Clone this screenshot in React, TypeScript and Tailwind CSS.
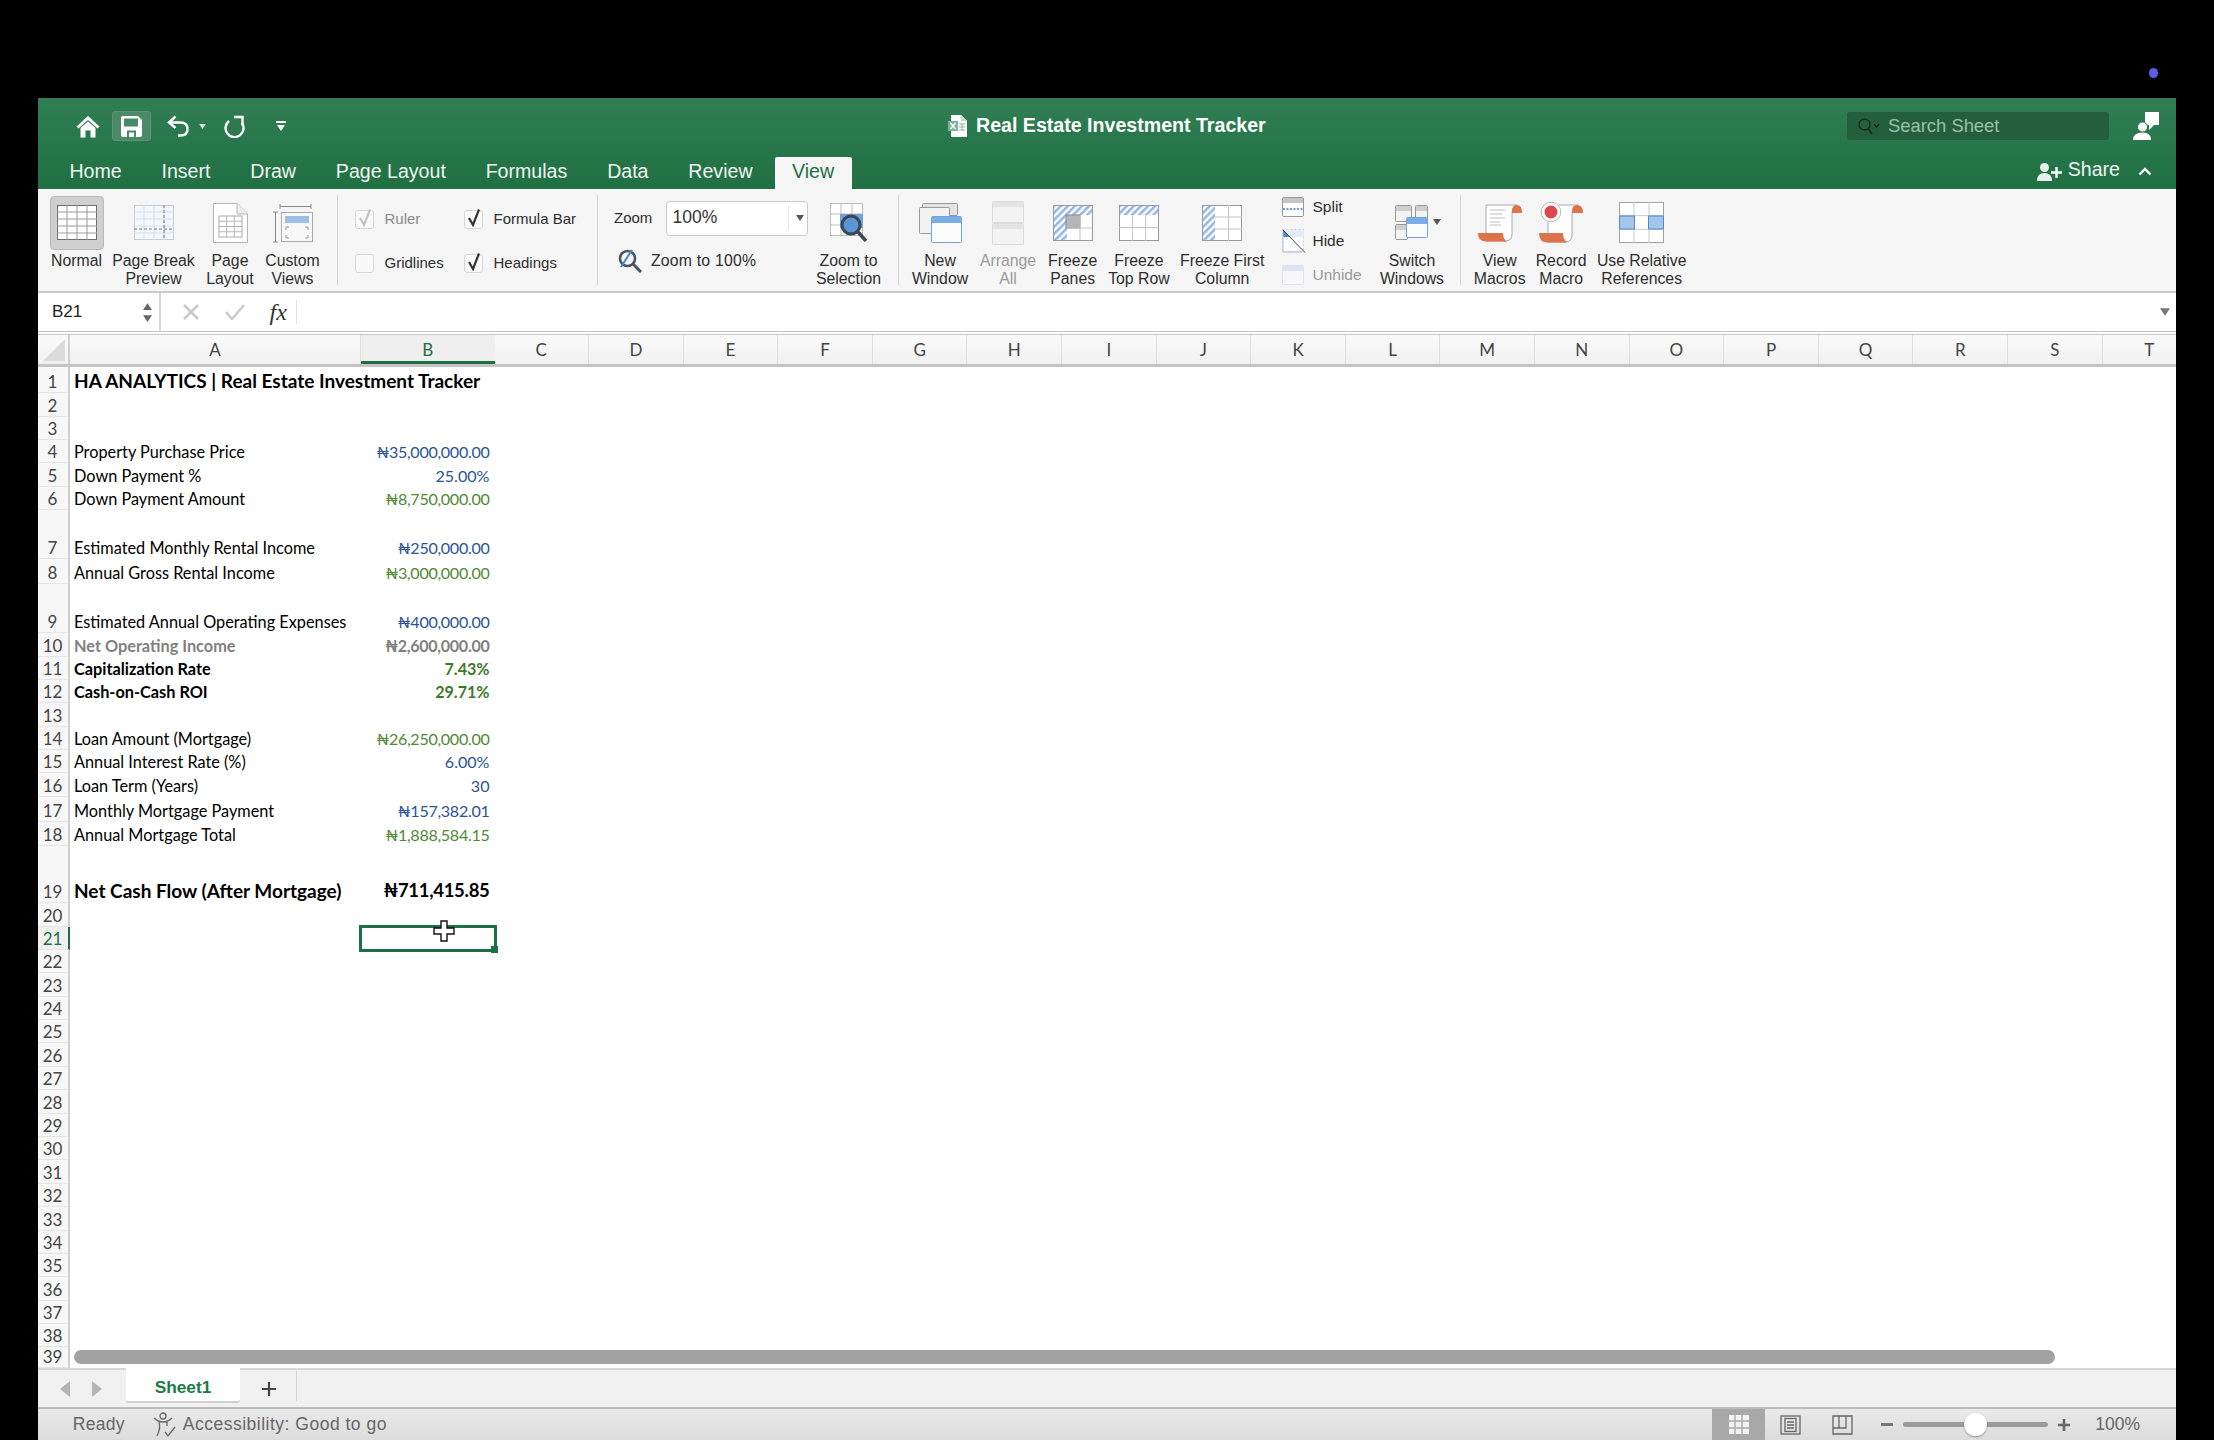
import type { ReactNode } from "react";

const sheetFont = "font-['Lato','Noto_Sans',sans-serif]";
const uiFont = "font-['Liberation_Sans',sans-serif]";

type Row = { label?: string; value?: string; tone?: string; big?: boolean; bold?: boolean };

const rowHeights = [
  "h-[26px]", "h-[23.7px]", "h-[23.3px]", "h-[23px]", "h-[24px]", "h-[23px]", "h-[49px]", "h-[25px]", "h-[49px]", "h-[24px]",
  "h-[23px]", "h-[23px]", "h-[24px]", "h-[23px]", "h-[23px]", "h-[24px]", "h-[25px]", "h-[24px]", "h-[57px]", "h-[24px]",
  "h-[23px]", "h-[23px]", "h-[24px]", "h-[23px]", "h-[23.4px]", "h-[23.4px]", "h-[23.4px]", "h-[23.4px]", "h-[23.4px]", "h-[23.4px]",
  "h-[23.4px]", "h-[23.4px]", "h-[23.4px]", "h-[23.4px]", "h-[23.4px]", "h-[23.4px]", "h-[23.4px]", "h-[23.4px]", "h-[20.5px]",
];

const blue = "text-[#2b5497]";
const green = "text-[#4f8a35]";
const boldGreen = "text-[#3f7a2c]";

const rows: Record<number, Row> = {
  1: { label: "HA ANALYTICS | Real Estate Investment Tracker", bold: true, big: true },
  4: { label: "Property Purchase Price", value: "₦35,000,000.00", tone: blue },
  5: { label: "Down Payment %", value: "25.00%", tone: blue },
  6: { label: "Down Payment Amount", value: "₦8,750,000.00", tone: green },
  7: { label: "Estimated Monthly Rental Income", value: "₦250,000.00", tone: blue },
  8: { label: "Annual Gross Rental Income", value: "₦3,000,000.00", tone: green },
  9: { label: "Estimated Annual Operating Expenses", value: "₦400,000.00", tone: blue },
  10: { label: "Net Operating Income", value: "₦2,600,000.00", tone: "text-[#7f7f7f]", bold: true },
  11: { label: "Capitalization Rate", value: "7.43%", tone: boldGreen, bold: true },
  12: { label: "Cash-on-Cash ROI", value: "29.71%", tone: boldGreen, bold: true },
  14: { label: "Loan Amount (Mortgage)", value: "₦26,250,000.00", tone: green },
  15: { label: "Annual Interest Rate (%)", value: "6.00%", tone: blue },
  16: { label: "Loan Term (Years)", value: "30", tone: blue },
  17: { label: "Monthly Mortgage Payment", value: "₦157,382.01", tone: blue },
  18: { label: "Annual Mortgage Total", value: "₦1,888,584.15", tone: green },
  19: { label: "Net Cash Flow (After Mortgage)", value: "₦711,415.85", tone: "text-black", bold: true, big: true },
};

const otherColumns = ["C", "D", "E", "F", "G", "H", "I", "J", "K", "L", "M", "N", "O", "P", "Q", "R", "S", "T"];
const tabs = ["Home", "Insert", "Draw", "Page Layout", "Formulas", "Data", "Review"];

function Cells({ x, y, w, h, cols, rows: r, stroke = "#bdbdbd" }: { x: number; y: number; w: number; h: number; cols: number; rows: number; stroke?: string }) {
  const lines = [];
  for (let i = 1; i < cols; i++) {
    const lx = x + (w / cols) * i;
    lines.push(<line key={`c${i}`} x1={lx} x2={lx} y1={y} y2={y + h} stroke={stroke} />);
  }
  for (let i = 1; i < r; i++) {
    const ly = y + (h / r) * i;
    lines.push(<line key={`r${i}`} x1={x} x2={x + w} y1={ly} y2={ly} stroke={stroke} />);
  }
  return <g>{lines}</g>;
}

function Hatch({ id }: { id: string }) {
  return (
    <pattern id={id} width="5" height="5" patternUnits="userSpaceOnUse" patternTransform="rotate(45)">
      <rect width="5" height="5" fill="#ffffff" />
      <rect width="2.6" height="5" fill="#94b8e2" />
    </pattern>
  );
}

function HomeIcon() {
  return (
    <svg width="24" height="23" viewBox="0 0 24 23">
      <path d="M12 1 L23.5 11.5 L21.5 13.5 L12 5 L2.5 13.5 L.5 11.5 Z" fill="#fff" />
      <path d="M4.5 13 L12 6.5 L19.5 13 V22.5 H14.5 V15.5 H9.5 V22.5 H4.5 Z" fill="#fff" />
    </svg>
  );
}

function SaveIcon() {
  return (
    <svg width="21" height="21" viewBox="0 0 21 21">
      <path d="M2 0 H17 L21 4 V19 Q21 21 19 21 H2 Q0 21 0 19 V2 Q0 0 2 0 Z" fill="#fff" />
      <rect x="3" y="2.5" width="14" height="8" fill="#4b8a66" />
      <rect x="6" y="14.5" width="9" height="6.5" fill="#4b8a66" />
      <rect x="8" y="16.5" width="5" height="4.5" fill="#fff" />
    </svg>
  );
}

function UndoIcon() {
  return (
    <svg width="22" height="22" viewBox="0 0 22 22" fill="none" stroke="#fff" strokeWidth="2.4">
      <path d="M8.5 1.5 L2 7.5 L8.5 13" />
      <path d="M2.5 7.5 H13 Q20.5 7.5 20.5 14 Q20.5 20.5 13.5 20.5 H11" />
    </svg>
  );
}

function RedoIcon() {
  return (
    <svg width="21" height="23" viewBox="0 0 21 23" fill="none" stroke="#fff" strokeWidth="2.4">
      <path d="M5 6 A9 9 0 1 0 18 8" />
      <path d="M10 2 H18.5 V10.5" />
    </svg>
  );
}

function Caret({ color = "#444", w = 8, h = 6 }: { color?: string; w?: number; h?: number }) {
  return (
    <svg width={w} height={h} viewBox="0 0 8 6">
      <path d="M0 0 H8 L4 6 Z" fill={color} />
    </svg>
  );
}

function DocIcon() {
  return (
    <svg width="19" height="22" viewBox="0 0 19 22">
      <path d="M3 0 H13 L19 6 V22 H3 Z" fill="#fff" />
      <path d="M13 0 L19 6 H13 Z" fill="#c9d9cf" />
      <rect x="0" y="6" width="10" height="10" fill="#7fb596" />
      <path d="M2.5 8 L7.5 14 M7.5 8 L2.5 14" stroke="#fff" strokeWidth="1.3" />
      <path d="M11 9 H17 M11 12 H17 M11 15 H17 M14 8 V16" stroke="#8fb8a0" />
    </svg>
  );
}

function SearchIcon() {
  return (
    <svg width="22" height="17" viewBox="0 0 22 17" fill="none" stroke="#10291b" strokeWidth="1.3">
      <circle cx="6.5" cy="6.5" r="5.5" />
      <path d="M10.5 11 L14 16" strokeWidth="1.6" />
      <path d="M16 6 L18.5 9 L21 6" />
    </svg>
  );
}

function CommentsIcon() {
  return (
    <svg width="26" height="28" viewBox="0 0 26 28">
      <path d="M12 0 H26 V13 H21 L16 18 V13 H12 Z" fill="#fff" />
      <circle cx="9.5" cy="15" r="5" fill="#fff" stroke="#2a7a4e" />
      <path d="M0 28 Q0 20.5 9.5 20.5 Q18 20.5 18 28 Z" fill="#fff" />
    </svg>
  );
}

function ShareIcon() {
  return (
    <svg width="25" height="18" viewBox="0 0 25 18">
      <circle cx="7.5" cy="4.5" r="4.5" fill="#e8f0eb" />
      <path d="M0 18 Q0 10 7.5 10 Q15 10 15 18 Z" fill="#e8f0eb" />
      <path d="M14 9.5 H25 M19.5 4 V15" stroke="#fff" strokeWidth="2.4" />
    </svg>
  );
}

function NormalIcon() {
  return (
    <svg width="40" height="35" viewBox="0 0 40 35">
      <rect x=".5" y=".5" width="39" height="34" fill="#fff" stroke="#6f6f6f" />
      <Cells x={0} y={0} w={40} h={35} cols={4} rows={5} stroke="#9a9a9a" />
    </svg>
  );
}

function PageBreakIcon() {
  return (
    <svg width="40" height="35" viewBox="0 0 40 35">
      <rect x=".5" y=".5" width="39" height="34" fill="#f3f6fb" stroke="#c4ccd6" />
      <Cells x={0} y={0} w={40} h={35} cols={4} rows={5} stroke="#d3dfee" />
      <path d="M30 0 V35 M0 24 H40" stroke="#777" strokeDasharray="3 2" />
    </svg>
  );
}

function PageLayoutIcon() {
  return (
    <svg width="35" height="40" viewBox="0 0 35 40">
      <path d="M.5 .5 H24 L34.5 11 V39.5 H.5 Z" fill="#fff" stroke="#b5b5b5" />
      <path d="M24 .5 V11 H34.5" fill="#ececec" stroke="#b5b5b5" />
      <rect x="6" y="13" width="23" height="21" fill="#fff" stroke="#a8a8a8" />
      <Cells x={6} y={13} w={23} h={21} cols={3} rows={4} stroke="#b5b5b5" />
    </svg>
  );
}

function CustomViewsIcon() {
  return (
    <svg width="41" height="40" viewBox="0 0 41 40" fill="none">
      <path d="M8 1 V6 M39 1 V6 M8 3.5 H39" stroke="#888" />
      <path d="M1 9 H6 M1 39 H6 M3.5 9 V39" stroke="#888" />
      <rect x="9.5" y="9.5" width="31" height="29" fill="#f8f8f8" stroke="#aaa" />
      <rect x="13" y="13" width="24" height="7" fill="#9bbfe6" />
      <path d="M14 27 V24 H17 M33 24 H36 V27 M14 32 V35 H17 M33 35 H36 V32" stroke="#999" />
    </svg>
  );
}

function Zoom100Icon() {
  return (
    <svg width="24" height="24" viewBox="0 0 24 24" fill="none">
      <circle cx="9.5" cy="9.5" r="7.5" stroke="#4a5361" strokeWidth="2.6" />
      <path d="M15 15 L23 23" stroke="#4a5361" strokeWidth="3" />
      <path d="M3 18 L14 1" stroke="#4a86d1" strokeWidth="2" />
    </svg>
  );
}

function ZoomSelectionIcon() {
  return (
    <svg width="38" height="39" viewBox="0 0 38 39" fill="none">
      <rect x=".5" y=".5" width="32" height="32" fill="#fff" stroke="#bcbcbc" />
      <Cells x={0} y={0} w={33} h={33} cols={3} rows={3} />
      <rect x="10" y="11" width="23" height="14" fill="#6ea3dd" />
      <circle cx="21" cy="22" r="9" fill="#5b96d4" stroke="#3c4654" strokeWidth="3" />
      <path d="M28 29 L36 38" stroke="#3c4654" strokeWidth="3.4" />
    </svg>
  );
}

function NewWindowIcon() {
  return (
    <svg width="43" height="40" viewBox="0 0 43 40">
      <rect x="3.5" y=".5" width="35" height="12" fill="#e3e3e3" stroke="#999" rx="1" />
      <rect x=".5" y="4.5" width="30" height="26" fill="#f2f2f2" stroke="#999" rx="1" />
      <rect x="12.5" y="13.5" width="30" height="26" fill="#fbfbfb" stroke="#6fa5dc" rx="1" />
      <rect x="13" y="14" width="29" height="6" fill="#78aee5" />
    </svg>
  );
}

function ArrangeIcon() {
  return (
    <svg width="32" height="44" viewBox="0 0 32 44">
      <rect x=".5" y=".5" width="31" height="21" fill="#f3f3f3" stroke="#dcdcdc" rx="1" />
      <rect x="1" y="1" width="30" height="5" fill="#e3e3e3" />
      <rect x=".5" y="22.5" width="31" height="21" fill="#f3f3f3" stroke="#dcdcdc" rx="1" />
      <rect x="1" y="23" width="30" height="5" fill="#e3e3e3" />
    </svg>
  );
}

function FreezePanesIcon() {
  return (
    <svg width="40" height="36" viewBox="0 0 40 36">
      <defs><Hatch id="fp" /></defs>
      <rect x=".5" y=".5" width="39" height="35" fill="#fff" stroke="#9a9a9a" />
      <rect x="1" y="1" width="38" height="9" fill="url(#fp)" />
      <rect x="1" y="1" width="13" height="34" fill="url(#fp)" />
      <rect x="13" y="10" width="14" height="13" fill="#b5b5b9" stroke="#888" />
      <path d="M27 23 H39 M14 23 H27 M27 10 V35" stroke="#c4c4c4" />
    </svg>
  );
}

function FreezeRowIcon() {
  return (
    <svg width="40" height="36" viewBox="0 0 40 36">
      <defs><Hatch id="fr" /></defs>
      <rect x=".5" y=".5" width="39" height="35" fill="#fff" stroke="#9a9a9a" />
      <Cells x={0} y={9} w={40} h={27} cols={3} rows={2} stroke="#c4c4c4" />
      <rect x="1" y="1" width="38" height="9" fill="url(#fr)" />
    </svg>
  );
}

function FreezeColumnIcon() {
  return (
    <svg width="40" height="36" viewBox="0 0 40 36">
      <defs><Hatch id="fc" /></defs>
      <rect x=".5" y=".5" width="39" height="35" fill="#fff" stroke="#9a9a9a" />
      <Cells x={13} y={0} w={27} h={36} cols={2} rows={3} stroke="#c4c4c4" />
      <rect x="1" y="1" width="12" height="34" fill="url(#fc)" />
    </svg>
  );
}

function SplitIcon() {
  return (
    <svg width="22" height="20" viewBox="0 0 22 20">
      <rect x=".5" y=".5" width="21" height="19" fill="#fff" stroke="#999" rx="1.5" />
      <rect x="1" y="1" width="20" height="5" fill="#c4c4c4" />
      <path d="M1 12 H21" stroke="#3d78c4" strokeDasharray="2 1.5" strokeWidth="1.4" />
    </svg>
  );
}

function HideIcon() {
  return (
    <svg width="24" height="24" viewBox="0 0 24 24">
      <rect x=".5" y=".5" width="21" height="22" fill="#fff" stroke="#cfcfcf" strokeDasharray="2 2" />
      <rect x="1" y="1" width="21" height="7" fill="#e4ecf6" />
      <path d="M1 1 L8 8 H1 Z" fill="#4a86d1" />
      <path d="M1 1 L23 23.5" stroke="#444" />
      <path d="M1 3 V23 H20" fill="none" stroke="#9dbfe4" />
    </svg>
  );
}

function UnhideIcon() {
  return (
    <svg width="22" height="20" viewBox="0 0 22 20">
      <rect x=".5" y=".5" width="21" height="19" fill="#f7f7f7" stroke="#dde4ec" rx="1" />
      <rect x="1" y="1" width="20" height="5" fill="#d9e5f3" />
    </svg>
  );
}

function SwitchIcon() {
  return (
    <svg width="33" height="35" viewBox="0 0 33 35">
      <rect x=".5" y=".5" width="16" height="16" fill="#f3f3f3" stroke="#999" rx="1" />
      <rect x="1" y="1" width="15" height="5" fill="#cfcfcf" />
      <rect x="20.5" y=".5" width="12" height="16" fill="#f3f3f3" stroke="#999" rx="1" />
      <rect x="21" y="1" width="11" height="5" fill="#cfcfcf" />
      <rect x=".5" y="19.5" width="12" height="15" fill="#f3f3f3" stroke="#999" rx="1" />
      <rect x="1" y="20" width="11" height="5" fill="#cfcfcf" />
      <rect x="11.5" y="12.5" width="21" height="20" fill="#fbfbfb" stroke="#6fa5dc" rx="1" />
      <rect x="12" y="13" width="20" height="6" fill="#78aee5" />
    </svg>
  );
}

function ViewMacrosIcon() {
  return (
    <svg width="44" height="38" viewBox="0 0 44 38">
      <path d="M8 1 H39 Q35 2 34 8 V30 Q34 37 27 37 H8 Z" fill="#fff" stroke="#a8a8a8" />
      <path d="M34 9 V7 Q34 1 39 1 Q44 1 44 9 Z" fill="#dd7349" />
      <path d="M0 29 H25 Q25 35 29 37.5 H8 Q0 37.5 0 29 Z" fill="#dd7349" />
      <path d="M12 6 H27 M12 10 H25 M12 14 H27 M12 18 H22 M12 21 H23" stroke="#bdbdbd" strokeWidth="1.2" />
    </svg>
  );
}

function RecordMacroIcon() {
  return (
    <svg width="44" height="41" viewBox="0 0 44 41">
      <path d="M20 3 H39 Q35 4 33 11 V33 Q33 40 26 40 H9 V20" fill="#fff" stroke="#a8a8a8" />
      <path d="M33 11 V9 Q33 3 38 3 Q44 3 44 11 Z" fill="#dd7349" />
      <path d="M0 31 H24 Q24 37 28 40.5 H8 Q0 40.5 0 31 Z" fill="#dd7349" />
      <circle cx="12" cy="10" r="9.8" fill="#fff" stroke="#bbb" />
      <circle cx="12" cy="10" r="6.5" fill="#e0474c" />
    </svg>
  );
}

function RelativeIcon() {
  return (
    <svg width="45" height="41" viewBox="0 0 45 41">
      <rect x=".5" y=".5" width="44" height="40" fill="#fff" stroke="#a0a0a0" />
      <Cells x={0} y={0} w={45} h={41} cols={3} rows={3} stroke="#c8c8c8" />
      <rect x=".5" y="14" width="15" height="13" fill="#a5c6ea" stroke="#4a8ad0" />
      <rect x="29.5" y="14" width="15" height="13" fill="#a5c6ea" stroke="#4a8ad0" />
    </svg>
  );
}

function BigButton({ width, icon, lines, muted }: { width: string; icon: ReactNode; lines: string[]; muted?: boolean }) {
  return (
    <div className={`flex shrink-0 flex-col items-center pt-[6px] ${width}`}>
      <div className="flex h-[55px] items-center justify-center">{icon}</div>
      <div className={`mt-[2px] flex flex-col items-center text-[15.8px] leading-[17.5px] whitespace-nowrap ${muted ? "text-[#9a9a9a]" : "text-[#2e2e2e]"}`}>
        {lines.map((l) => (
          <span key={l}>{l}</span>
        ))}
      </div>
    </div>
  );
}

function RibbonCheck({ label, checked, muted }: { label: string; checked?: boolean; muted?: boolean }) {
  return (
    <div className="flex h-[19px] items-center">
      <span className="flex h-[19px] w-[19px] items-center justify-center rounded-[3px] border border-[#d6d6d6] bg-[#f9f9f9]">
        {checked ? (
          <svg className="-mt-[3px]" width="14" height="19" viewBox="0 0 14 19" fill="none">
            <path d="M2 10 L6 17 L12 1.5" stroke={muted ? "#c4c4c4" : "#333"} strokeWidth="2.2" />
          </svg>
        ) : null}
      </span>
      <span className={`ml-[10.5px] text-[15px] whitespace-nowrap ${muted ? "text-[#8a8a8a]" : "text-[#2e2e2e]"}`}>{label}</span>
    </div>
  );
}

function Separator({ margin }: { margin: string }) {
  return <div className={`mt-[6px] h-[90px] w-px shrink-0 bg-[#d4d4d4] ${margin}`} />;
}

function SmallAction({ icon, label, muted }: { icon: ReactNode; label: string; muted?: boolean }) {
  return (
    <div className="flex h-[24px] items-center">
      <div className="flex w-[30px] justify-start">{icon}</div>
      <span className={`text-[15.5px] ${muted ? "text-[#9a9a9a]" : "text-[#2e2e2e]"}`}>{label}</span>
    </div>
  );
}

function Ribbon() {
  return (
    <div className={`flex h-[104px] shrink-0 border-b-2 border-[#cbcbcb] bg-[#f5f5f5] pl-[11.5px] ${uiFont}`}>
      <BigButton
        width="w-[54px]"
        icon={
          <div className="flex h-[54px] w-[54px] items-center justify-center rounded-[4px] border border-[#b9b9b9] bg-[#cfcfcf]">
            <NormalIcon />
          </div>
        }
        lines={["Normal"]}
      />
      <BigButton width="w-[100px]" icon={<PageBreakIcon />} lines={["Page Break", "Preview"]} />
      <BigButton width="w-[53px]" icon={<PageLayoutIcon />} lines={["Page", "Layout"]} />
      <BigButton width="w-[72px]" icon={<CustomViewsIcon />} lines={["Custom", "Views"]} />
      <Separator margin="ml-[8px]" />

      <div className="ml-[17.5px] flex w-[109px] shrink-0 flex-col gap-[25px] pt-[20.7px]">
        <RibbonCheck label="Ruler" checked muted />
        <RibbonCheck label="Gridlines" />
      </div>
      <div className="flex w-[133px] shrink-0 flex-col gap-[25px] pt-[20.7px]">
        <RibbonCheck label="Formula Bar" checked />
        <RibbonCheck label="Headings" checked />
      </div>
      <Separator margin="" />

      <div className="ml-[16px] flex w-[196px] shrink-0 flex-col pt-[12px]">
        <div className="flex h-[35px] items-center">
          <span className="w-[51.5px] text-[15px] text-[#2e2e2e]">Zoom</span>
          <div className="flex h-[35px] w-[142px] items-center rounded-[4px] border border-[#c9c9c9] bg-white pb-[2px] pl-[6px]">
            <span className="w-[115px] text-[17.5px] text-[#333]">100%</span>
            <span className="mr-[7px] h-[24px] w-px bg-[#e4e4e4]" />
            <Caret color="#555" />
          </div>
        </div>
        <div className="mt-[13px] flex items-center pl-[4px]">
          <Zoom100Icon />
          <span className="ml-[9px] text-[15.8px] tracking-[0.2px] text-[#2e2e2e]">Zoom to 100%</span>
        </div>
      </div>
      <BigButton width="w-[77px]" icon={<ZoomSelectionIcon />} lines={["Zoom to", "Selection"]} />
      <Separator margin="ml-[11px]" />

      <BigButton width="w-[82px]" icon={<NewWindowIcon />} lines={["New", "Window"]} />
      <BigButton width="w-[54px]" icon={<ArrangeIcon />} lines={["Arrange", "All"]} muted />
      <BigButton width="w-[75.4px]" icon={<FreezePanesIcon />} lines={["Freeze", "Panes"]} />
      <BigButton width="w-[57px]" icon={<FreezeRowIcon />} lines={["Freeze", "Top Row"]} />
      <BigButton width="w-[109.6px]" icon={<FreezeColumnIcon />} lines={["Freeze First", "Column"]} />

      <div className="flex w-[93px] shrink-0 flex-col gap-[10px] pt-[6px] pl-[5.5px]">
        <SmallAction icon={<SplitIcon />} label="Split" />
        <SmallAction icon={<HideIcon />} label="Hide" />
        <SmallAction icon={<UnhideIcon />} label="Unhide" muted />
      </div>
      <div className="relative w-[84px] shrink-0">
        <BigButton width="w-[84px]" icon={<SwitchIcon />} lines={["Switch", "Windows"]} />
        <span className="absolute top-[30px] left-[63px]">
          <Caret color="#555" />
        </span>
      </div>
      <Separator margin="ml-[5.7px]" />

      <BigButton width="w-[78px]" icon={<ViewMacrosIcon />} lines={["View", "Macros"]} />
      <BigButton width="w-[45px]" icon={<RecordMacroIcon />} lines={["Record", "Macro"]} />
      <BigButton width="w-[116px]" icon={<RelativeIcon />} lines={["Use Relative", "References"]} />
    </div>
  );
}

function TitleBar() {
  return (
    <div className={`flex h-[91px] shrink-0 flex-col bg-gradient-to-b from-[#317e54] to-[#1f7043] ${uiFont}`}>
      <div className="flex h-[56px] shrink-0 items-center">
        <div className="flex w-[620px] items-center pl-[37.5px]">
          <HomeIcon />
          <div className="ml-[12.5px] flex h-[30px] w-[39px] items-center justify-center rounded-[3px] border border-[#5d9377] bg-[#4b8a66]">
            <SaveIcon />
          </div>
          <div className="ml-[16px]">
            <UndoIcon />
          </div>
          <div className="ml-[10px]">
            <Caret color="#d8e6dd" w={7} h={5} />
          </div>
          <div className="ml-[18px]">
            <RedoIcon />
          </div>
          <div className="ml-[31px] flex flex-col items-center gap-[2px]">
            <span className="h-[2px] w-[10px] bg-white" />
            <Caret color="#fff" w={10} h={6} />
          </div>
        </div>
        <div className="ml-[289.5px] flex items-center">
          <DocIcon />
          <span className="ml-[9.5px] text-[19.6px] font-bold whitespace-nowrap text-white">Real Estate Investment Tracker</span>
        </div>
        <div className="ml-auto flex items-center pr-[17px]">
          <div className="flex h-[28px] w-[262px] items-center rounded-[3px] bg-[#235f3c] pl-[11px]">
            <SearchIcon />
            <span className="ml-[8px] text-[18.4px] text-[#9cbfa9]">Search Sheet</span>
          </div>
          <div className="ml-[24px]">
            <CommentsIcon />
          </div>
        </div>
      </div>
      <div className="flex h-[35px] items-end pl-[31.4px]">
        <div className="flex h-[32px] items-center gap-[39.8px] pb-[3px] text-[19.6px] whitespace-nowrap text-[#f0f5f2]">
          {tabs.map((t) => (
            <span key={t}>{t}</span>
          ))}
        </div>
        <div className="ml-[22px] flex h-[32px] w-[77px] items-center justify-center rounded-t-[2px] bg-[#f5f5f5] pb-[3px] text-[19.6px] text-[#1d6f42]">View</div>
        <div className="ml-auto flex h-[32px] items-start pr-[24px] text-[#f0f5f2]">
          <span className="mt-[6px]">
            <ShareIcon />
          </span>
          <span className="ml-[6px] text-[19.6px] leading-[24px]">Share</span>
          <svg className="mt-[10px] ml-[18px]" width="14" height="9" viewBox="0 0 14 9" fill="none">
            <path d="M1.5 7.5 L7 2 L12.5 7.5" stroke="#fff" strokeWidth="2.4" />
          </svg>
        </div>
      </div>
    </div>
  );
}

function FormulaBar() {
  return (
    <div className={`flex h-[38px] shrink-0 items-center bg-white ${uiFont}`}>
      <div className="flex h-full w-[122.5px] items-center justify-between border-r-2 border-[#d6d6d6] pr-[7px] pl-[14px] text-[17px] text-[#222]">
        <span>B21</span>
        <span className="flex flex-col gap-[5px]">
          <span className="block rotate-180">
            <Caret color="#666" w={9} h={7} />
          </span>
          <Caret color="#666" w={9} h={7} />
        </span>
      </div>
      <svg className="ml-[22px]" width="16" height="16" viewBox="0 0 16 16" fill="none">
        <path d="M1 1 L15 15 M15 1 L1 15" stroke="#c9c9c9" strokeWidth="2.6" />
      </svg>
      <svg className="ml-[26px]" width="20" height="16" viewBox="0 0 20 16" fill="none">
        <path d="M1 8 L7 15 L19 1" stroke="#c9c9c9" strokeWidth="2.4" />
      </svg>
      <span className="ml-[25px] font-['Liberation_Serif',serif] text-[24px] text-[#333] italic">fx</span>
      <span className="ml-[9px] h-[24px] w-px bg-[#e0e0e0]" />
      <div className="ml-auto pr-[6px]">
        <Caret color="#777" w={10} h={8} />
      </div>
    </div>
  );
}

function ColumnHeaders() {
  return (
    <div className={`flex h-[32px] shrink-0 overflow-hidden border-b-[3px] border-[#c4c4c4] bg-gradient-to-b from-[#fafafa] to-[#f1f1f1] text-[17px] text-[#444] ${sheetFont}`}>
      <div className="flex w-[32px] shrink-0 items-end justify-end border-r-2 border-[#cfcfcf] pr-[3px] pb-[3px]">
        <svg width="22" height="22" viewBox="0 0 22 22">
          <path d="M22 0 V22 H0 Z" fill="#dbdbdb" />
        </svg>
      </div>
      <div className="flex w-[291px] shrink-0 items-center justify-center border-r border-[#dedede]">A</div>
      <div className="flex w-[133.5px] shrink-0 items-center justify-center bg-[#efefef] text-[#1d6f42] shadow-[inset_0_-3px_0_#1d6f42]">B</div>
      {otherColumns.map((c) => (
        <div key={c} className="flex w-[94.6px] shrink-0 items-center justify-center border-r border-[#dedede]">
          {c}
        </div>
      ))}
    </div>
  );
}

function SelectedCell() {
  return (
    <div className="absolute -inset-x-[2px] -top-[1.5px] -bottom-[2px] border-[3px] border-[#1d7044]">
      <span className="absolute -right-[4px] -bottom-[4px] h-[7px] w-[7px] bg-[#1d7044]" />
      <svg className="absolute -top-[8px] left-[71px]" width="22" height="22" viewBox="0 0 22 22">
        <path d="M8 1 H14 V8 H21 V14 H14 V21 H8 V14 H1 V8 H8 Z" fill="#fff" stroke="#111" strokeWidth="1.4" />
      </svg>
    </div>
  );
}

function SheetGrid() {
  return (
    <div className={`relative min-h-0 flex-1 overflow-hidden bg-white ${sheetFont}`}>
      {rowHeights.map((height, i) => {
        const n = i + 1;
        const row = rows[n];
        const selected = n === 21;
        const textSize = row?.big ? "text-[19px] leading-[25px]" : "text-[16.3px] leading-[22px]";
        const valueSize = row?.big ? "text-[18.5px] leading-[25px]" : "text-[16.1px] leading-[22px]";
        const tight = row?.value?.startsWith("₦") ? "tracking-[-0.3px]" : "";
        return (
          <div key={n} className={`flex ${height}`}>
            <div
              className={`flex w-[32px] shrink-0 items-end justify-center border-r-2 border-b pr-[1px] text-[17px] leading-[20px] ${selected ? "border-r-[#1d6f42] border-b-[#e4e4e4] bg-[#f0f0f0] text-[#1d6f42]" : "border-r-[#cfcfcf] border-b-[#e4e4e4] bg-[#f7f7f7] text-[#444]"}`}
            >
              {n}
            </div>
            <div className={`flex w-[291px] shrink-0 items-end pl-[4px] whitespace-nowrap ${textSize} ${row?.bold ? "font-bold" : ""} ${n === 10 ? "text-[#7f7f7f]" : "text-black"}`}>
              {row?.label}
            </div>
            <div className={`relative flex w-[133.5px] shrink-0 items-end justify-end pr-[5px] ${valueSize} ${tight} ${row?.bold ? "font-bold" : ""} ${row?.tone ?? ""}`}>
              {row?.value}
              {selected ? <SelectedCell /> : null}
            </div>
          </div>
        );
      })}
      <div className="absolute top-[983px] left-[35.5px] h-[14px] w-[1981px] rounded-full bg-[#a2a2a2]" />
    </div>
  );
}

function SheetTabs() {
  return (
    <div className="flex h-[39px] shrink-0 border-t-2 border-[#d8d8d8] bg-[#f0f0f0]">
      <div className="flex w-[88px] items-center gap-[22px] pl-[22px]">
        <svg width="10" height="16" viewBox="0 0 10 16">
          <path d="M10 0 V16 L0 8 Z" fill="#b4b4b4" />
        </svg>
        <svg width="10" height="16" viewBox="0 0 10 16">
          <path d="M0 0 V16 L10 8 Z" fill="#b4b4b4" />
        </svg>
      </div>
      <div className="-mt-[2px] flex h-[35px] w-[114px] items-center justify-center rounded-b-[3px] border-b-2 border-[#cfcfcf] bg-white pt-[6px] font-['Liberation_Sans',sans-serif] text-[17.3px] font-bold text-[#1d7a48]">
        Sheet1
      </div>
      <svg className="mt-[12px] ml-[22px]" width="14" height="14" viewBox="0 0 14 14">
        <path d="M7 0 V14 M0 7 H14" stroke="#444" strokeWidth="2.2" />
      </svg>
      <div className="mt-[1px] ml-[20px] h-[30px] w-px bg-[#d4d4d4]" />
    </div>
  );
}

function StatusBar() {
  return (
    <div className="flex h-[33px] shrink-0 items-center border-t-2 border-[#bcbcbc] bg-gradient-to-b from-[#e9e9e9] to-[#dcdcdc] font-['Liberation_Sans',sans-serif] text-[#666]">
      <span className="ml-[34.7px] text-[17.5px] tracking-[0.3px]">Ready</span>
      <svg className="ml-[28px]" width="24" height="26" viewBox="0 0 24 26" fill="none" stroke="#666" strokeWidth="1.3">
        <circle cx="10" cy="4" r="3" />
        <path d="M1 6 Q5 10 10 10 Q15 10 19 6 M6 10 Q8 16 4 24 M14 10 V14" />
        <path d="M12 20 L15 24 L22 15" />
      </svg>
      <span className="ml-[6px] text-[17.5px] tracking-[0.5px] whitespace-nowrap">Accessibility: Good to go</span>
      <div className="ml-auto flex h-full w-[53px] items-center justify-center bg-[#a8a8a8]">
        <svg width="20" height="19" viewBox="0 0 20 19">
          <rect width="20" height="19" fill="#f2f2f2" />
          <path d="M6 0 V19 M13 0 V19 M0 6 H20 M0 13 H20" stroke="#a8a8a8" strokeWidth="1.4" />
        </svg>
      </div>
      <svg className="ml-[15px]" width="21" height="20" viewBox="0 0 21 20" fill="none" stroke="#666" strokeWidth="1.3">
        <rect x="1" y="1" width="19" height="18" />
        <rect x="5" y="3.5" width="11" height="13" />
        <path d="M7 7 H14 M7 10 H14 M7 13 H14" />
      </svg>
      <svg className="ml-[31px]" width="21" height="20" viewBox="0 0 21 20" fill="none" stroke="#666" strokeWidth="1.3">
        <path d="M1 1 H20 V19 H1 Z M1 13 H14 V1 M7 1 V13" />
      </svg>
      <span className="ml-[28px] h-[3px] w-[12px] bg-[#777]" />
      <div className="relative ml-[10px] h-[5px] w-[145px] rounded-full bg-[#9a9a9a]">
        <span className="absolute -top-[9px] left-[61px] h-[23px] w-[23px] rounded-full bg-white shadow-[0_1px_2px_rgba(0,0,0,0.35)]" />
      </div>
      <svg className="ml-[10px]" width="12" height="12" viewBox="0 0 12 12">
        <path d="M6 0 V12 M0 6 H12" stroke="#666" strokeWidth="2.6" />
      </svg>
      <span className="mr-[36px] ml-[25px] text-[17.5px]">100%</span>
    </div>
  );
}

export default function App() {
  return (
    <div className="flex h-[1440px] w-[2214px] flex-col overflow-hidden bg-black">
      <div className="flex h-[98px] shrink-0 justify-end pt-[68px] pr-[56px]">
        <span className="h-[10px] w-[9px] rounded-full bg-[#5e5ce6]" />
      </div>
      <div className="ml-[38px] flex min-h-0 w-[2138px] flex-1 flex-col bg-white">
        <TitleBar />
        <Ribbon />
        <FormulaBar />
        <div className="h-[4px] shrink-0 border-y border-[#c4c4c4] bg-white" />
        <ColumnHeaders />
        <SheetGrid />
        <SheetTabs />
        <StatusBar />
      </div>
    </div>
  );
}
